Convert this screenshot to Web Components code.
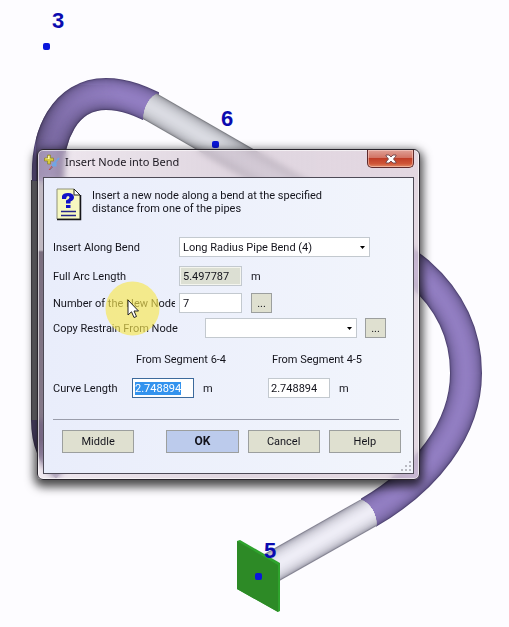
<!DOCTYPE html>
<html lang="en">
<head>
<meta charset="utf-8">
<meta name="viewport" content="width=device-width, initial-scale=1">
<title>Insert Node into Bend</title>
<style>
  body {
    margin: 0;
    background: #fdfcff;
    color: #14141c;
    font: 11px/13px Roboto, Arial, sans-serif;
  }
  main {
    position: relative;
  }
  dialog-window {
    position: absolute;
    top: 149px;
    left: 37px;
    right: 89px;
  }
  mouse-pointer {
    position: absolute;
    top: 281px;
    left: 105px;
  }
  .fields {
    display: flex;
    flex-direction: column;
    padding: 16px 0 15px;
  }
  .arc { margin-top: 9px; }
  .node { margin-top: 7px; }
  .restrain { margin-top: 5px; }
  .actions {
    display: flex;
    gap: 9px;
    margin: 10px 0 0 9px;
    padding-right: 2px;
  }
  .actions push-button:first-child {
    margin-right: 23px;
  }
</style>
</head>
<body>
<main>
  <pipe-scene></pipe-scene>
  <dialog-window>
    <span slot="title">Insert Node into Bend</span>
    <hint-banner>Insert a new node along a bend at the specified distance from one of the pipes</hint-banner>
    <div class="fields">
      <select-field label="Insert Along Bend" value="Long Radius Pipe Bend (4)"></select-field>
      <text-field class="arc" label="Full Arc Length" value="5.497787" unit="m" readonly></text-field>
      <text-field class="node" label="Number of the New Node" value="7" browse></text-field>
      <select-field class="restrain" label="Copy Restrain From Node" value="" wide browse></select-field>
    </div>
    <curve-lengths first="From Segment 6-4" second="From Segment 4-5" value="2.748894"></curve-lengths>
    <div class="actions">
      <push-button>Middle</push-button>
      <push-button primary>OK</push-button>
      <push-button>Cancel</push-button>
      <push-button>Help</push-button>
    </div>
  </dialog-window>
  <mouse-pointer></mouse-pointer>
</main>

<script>
const controlStyles = `
  input, select {
    box-sizing: border-box;
    height: 20px;
    margin: 0;
    padding: 0 3px;
    border: 1px solid #c3c9cf;
    border-radius: 0;
    background: #fff;
    color: inherit;
    font: 11px/15px Roboto, Arial, sans-serif;
    outline: none;
  }
  button {
    box-sizing: border-box;
    margin: 0;
    padding: 0;
    border: 1px solid #9c9f9e;
    border-radius: 0;
    background: #dfe0d0;
    color: inherit;
    font: inherit;
  }
  .browse {
    flex: none;
    width: 21px;
    height: 20px;
  }
`;

class PipeScene extends HTMLElement {
  constructor() {
    super();
    this.attachShadow({ mode: 'open' });
  }

  connectedCallback() {
    const purple = [[82, 70, 118], [146, 126, 194]];
    const dim = [[68, 58, 92], [118, 102, 156]];
    const white = [[134, 133, 148], [238, 237, 246]];
    const upper = [[128, 130, 136], [218, 219, 226]];
    const gray = [[70, 68, 74], [176, 175, 181]];

    this.shadowRoot.innerHTML = `
      <style>
        :host {
          display: block;
        }
        svg {
          display: block;
          width: 100%;
        }
        text {
          fill: #0b0bb0;
          font: bold 22px "Liberation Sans", Arial, sans-serif;
        }
        .dot { fill: #0a16dc; }
      </style>
      <svg viewBox="0 0 509 627" role="img" aria-label="Pipe model">
        <defs>
          <linearGradient id="shade" gradientUnits="userSpaceOnUse" x1="40" y1="170" x2="150" y2="90">
            <stop offset="0.1" stop-color="#fff" />
            <stop offset="0.8" stop-color="#000" />
          </linearGradient>
          <mask id="fade">
            <rect width="509" height="627" fill="url(#shade)" />
          </mask>
          <clipPath id="upper-end">
            <path d="M160 92C150 96 143 107 143 122L143 300H400V80Z" />
          </clipPath>
          <clipPath id="upper-bend">
            <path d="M0 0H159V100L150 122L143 119V300H0Z" />
          </clipPath>
          <clipPath id="lower-end">
            <path d="M359 499C370 502 377 514 377 528L377 600H200V480H359Z" />
          </clipPath>
          <clipPath id="lower-bend">
            <path d="M361 501V200H509V627H376V525L362 515Z" />
          </clipPath>
        </defs>
        ${this.pipe('M47 180V420', 32, gray)}
        ${this.pipe('M47 420C47 440 52 455 66 466', 32, dim)}
        <g clip-path="url(#upper-bend)">
          ${this.pipe('M48 180C46 135 65 94 106 94C125 94 142 101 162 112', 32, purple)}
          <g mask="url(#fade)">
            ${this.pipe('M48 180C46 135 65 94 106 94C125 94 142 101 162 112', 32, dim)}
          </g>
        </g>
        <g clip-path="url(#upper-end)">
          ${this.pipe('M134 97L370 233', 29, upper)}
        </g>
        <g clip-path="url(#lower-bend)">
          ${this.pipe('M380 246C395 254 408 264 419 273C450 300 466 335 466 373C466 430 425 480 368 513L350 523', 32, purple)}
        </g>
        <g clip-path="url(#lower-end)">
          ${this.pipe('M262 573L384 504', 31, white)}
        </g>
        <path d="M237 541L240 540L280 563V611L278 612L237 589Z" fill="#2fa32d" />
        <path d="M237 541L278 565V612L237 589Z" fill="#2d8a26" />
        <text x="52" y="28">3</text>
        <text x="221" y="126">6</text>
        <text x="264" y="558">5</text>
        <rect class="dot" x="43" y="43" width="7" height="7" rx="2" />
        <rect class="dot" x="212" y="141" width="7" height="7" rx="2" />
        <rect class="dot" x="255" y="573" width="7" height="7" rx="2" />
      </svg>
    `;
  }

  // stacked strokes, dark rim first, give the round shading
  pipe(d, size, [rim, light]) {
    let strokes = '';
    for (let width = size; width > 1; width -= 2) {
      const t = Math.sqrt(1 - (width / size) ** 2);
      const color = rim.map((c, i) => Math.round(c + (light[i] - c) * t));
      strokes += `<path d="${d}" fill="none" stroke="rgb(${color})" stroke-width="${width}" />`;
    }
    return strokes;
  }
}

class DialogWindow extends HTMLElement {
  constructor() {
    super();
    this.attachShadow({ mode: 'open' });
  }

  connectedCallback() {
    this.shadowRoot.innerHTML = `
      <style>
        :host {
          display: block;
          box-sizing: border-box;
          padding: 0 5px 5px;
          border: 1px solid #2a262e;
          border-radius: 6px;
          background:
            linear-gradient(transparent 100px, rgba(75, 60, 82, 0.6) 102px, rgba(75, 60, 82, 0.5) 290px, transparent 320px) 0 0 / 5px 100% no-repeat,
            linear-gradient(90deg, rgba(222, 208, 220, 0.45), rgba(204, 188, 203, 0.6) 50%, rgba(218, 204, 216, 0.75));
          box-shadow: inset 0 0 0 1px rgba(255, 255, 255, 0.6), 0 4px 10px 3px rgba(0, 0, 0, 0.7);
          backdrop-filter: blur(3px);
        }
        header {
          display: flex;
          align-items: flex-start;
          height: 27px;
        }
        .icon {
          flex: none;
          margin: 4px 5px 0 1px;
        }
        h1 {
          flex: 1;
          margin: 4px 0 0;
          color: #1b1720;
          font: 11px/16px "Noto Sans", sans-serif;
        }
        button {
          display: grid;
          place-items: center;
          width: 47px;
          height: 18px;
          padding: 0;
          border: 1px solid #5e2a2c;
          border-top: 0;
          border-radius: 0 0 5px 5px;
          background: linear-gradient(#e0a197, #d27464 45%, #c03e27 50%, #cf5537 80%, #e08a66);
          box-shadow: inset 0 0 0 1px rgba(255, 220, 210, 0.5);
        }
        .body {
          position: relative;
          padding: 10px 10px 20px 9px;
          border: 1px solid #4d4a56;
          background: linear-gradient(90deg, #e9edfb, #f2f5fc);
        }
        .grip {
          position: absolute;
          right: 1px;
          bottom: 1px;
        }
      </style>
      <header>
        <svg class="icon" width="16" height="17" viewBox="0 0 16 17" aria-hidden="true">
          <path d="M5 16L9 11" stroke="#c4453c" stroke-width="1" />
          <path d="M8 12L15 4" stroke="#6aa5e6" stroke-width="1.500" />
          <path d="M6 16L9 13" stroke="#7a7f9c" stroke-width="1" />
          <path d="M8.500 8.500h4v4h-4z" fill="#6fa6e4" />
          <path d="M3.500 1h3v3h3v3h-3v3h-3V7h-3V4h3z" fill="#d9cb3c" stroke="#8f8735" stroke-width="0.800" />
          <path d="M4 2h1.500v3h-4V4.500H4z" fill="#fbf6a8" />
        </svg>
        <h1><slot name="title"></slot></h1>
        <button type="button" aria-label="Close">
          <svg width="12" height="10" viewBox="0 0 12 10">
            <path d="M1 1h3l2 2 2-2h3v1L8.500 5 11 8v1H8L6 7 4 9H1V8l2.500-3L1 2z" fill="#fff" stroke="#6d4448" stroke-width="0.900" />
          </svg>
        </button>
      </header>
      <div class="body">
        <slot></slot>
        <svg class="grip" width="11" height="11" viewBox="0 0 11 11" aria-hidden="true">
          <path d="M8 0h2v2h-2zM4 4h2v2h-2zM8 4h2v2h-2zM0 8h2v2h-2zM4 8h2v2h-2zM8 8h2v2h-2z" fill="#b9bac2" />
        </svg>
      </div>
    `;
  }
}

class HintBanner extends HTMLElement {
  constructor() {
    super();
    this.attachShadow({ mode: 'open' });
  }

  connectedCallback() {
    this.shadowRoot.innerHTML = `
      <style>
        :host {
          display: flex;
          gap: 10px;
          padding-left: 3px;
        }
        svg {
          flex: none;
        }
        p {
          max-width: 236px;
          margin: 1px 0 0;
        }
      </style>
      <svg width="26" height="33" viewBox="0 0 26 33" aria-hidden="true">
        <path d="M1 1H18L24 7V31H1Z" fill="#f6f8c0" stroke="#8f9078" />
        <path d="M24.500 7V31.500H1" fill="none" stroke="#15151a" stroke-width="1.500" />
        <path d="M18 1V7H24Z" fill="#fff" stroke="#222" />
        <path d="M6 11V8Q7 5 12 5Q18 5 18 9.500Q18 12 14.500 13.500V15.500H10V12.500Q13.500 11 13.500 9.500Q13.500 8 12 8Q10.500 8 10 11Z" fill="#1212c8" />
        <path d="M10 17h4.500v3h-4.500z" fill="#1212c8" />
        <path d="M5 23.500H20M5 27.500H20" stroke="#24248c" stroke-width="1.500" />
      </svg>
      <p><slot></slot></p>
    `;
  }
}

class TextField extends HTMLElement {
  constructor() {
    super();
    this.attachShadow({ mode: 'open' });
  }

  connectedCallback() {
    const unit = this.getAttribute('unit');
    this.shadowRoot.innerHTML = `
      <style>
        ${controlStyles}
        :host {
          display: flex;
          align-items: center;
        }
        label {
          flex: none;
          width: 122px;
          margin-right: 4px;
          overflow: hidden;
          white-space: nowrap;
        }
        input {
          width: 63px;
          margin-right: 9px;
        }
        input[readonly] {
          background: #dcdfd3;
          box-shadow: inset 0 0 0 1px #f4f5ee;
        }
      </style>
      <label for="field">${this.getAttribute('label')}</label>
      <input id="field" type="text" value="${this.getAttribute('value')}" ${this.hasAttribute('readonly') ? 'readonly' : ''}>
      ${unit ? `<span>${unit}</span>` : ''}
      ${this.hasAttribute('browse') ? '<button class="browse" type="button">...</button>' : ''}
    `;
  }
}

class SelectField extends HTMLElement {
  constructor() {
    super();
    this.attachShadow({ mode: 'open' });
  }

  connectedCallback() {
    this.shadowRoot.innerHTML = `
      <style>
        ${controlStyles}
        :host {
          display: flex;
          align-items: center;
          gap: 8px;
          padding-right: 33px;
        }
        :host([wide]) {
          padding-right: 17px;
        }
        label {
          flex: none;
          width: 118px;
          white-space: nowrap;
        }
        :host([wide]) label {
          width: 144px;
        }
        .box {
          display: grid;
          flex: 1;
          align-items: center;
        }
        select, svg {
          grid-area: 1 / 1;
        }
        select {
          width: 100%;
          appearance: none;
        }
        svg {
          justify-self: end;
          margin-right: 5px;
          pointer-events: none;
        }
      </style>
      <label for="field">${this.getAttribute('label')}</label>
      <div class="box">
        <select id="field">
          <option>${this.getAttribute('value')}</option>
        </select>
        <svg width="5" height="3" viewBox="0 0 5 3" aria-hidden="true"><path d="M0 0H5L2.500 3Z" fill="#000" /></svg>
      </div>
      ${this.hasAttribute('browse') ? '<button class="browse" type="button">...</button>' : ''}
    `;
  }
}

class CurveLengths extends HTMLElement {
  constructor() {
    super();
    this.attachShadow({ mode: 'open' });
  }

  connectedCallback() {
    const value = this.getAttribute('value');
    this.shadowRoot.innerHTML = `
      <style>
        ${controlStyles}
        :host {
          display: grid;
          grid-template-columns: 79px 136px 1fr;
          row-gap: 12px;
          align-items: center;
          margin-right: 4px;
          padding-bottom: 21px;
          border-bottom: 1px solid #9a9dab;
        }
        .heading {
          padding-left: 4px;
          white-space: nowrap;
        }
        #first {
          grid-column: 2;
        }
        .entry {
          display: flex;
          align-items: center;
          gap: 9px;
        }
        input {
          width: 62px;
          padding: 0 2px;
        }
        input:focus {
          border-color: #3c6a9c;
        }
        input::selection {
          background: #3393ee;
          color: #fff;
        }
      </style>
      <span class="heading" id="first">${this.getAttribute('first')}</span>
      <span class="heading" id="second">${this.getAttribute('second')}</span>
      <label for="field" id="name">Curve Length</label>
      <div class="entry">
        <input id="field" type="text" value="${value}" aria-labelledby="name first"><span>m</span>
      </div>
      <div class="entry">
        <input type="text" value="${value}" aria-labelledby="name second"><span>m</span>
      </div>
    `;

    const field = this.shadowRoot.querySelector('#field');
    field.focus();
    field.select();
  }
}

class PushButton extends HTMLElement {
  constructor() {
    super();
    this.attachShadow({ mode: 'open' });
  }

  connectedCallback() {
    this.shadowRoot.innerHTML = `
      <style>
        ${controlStyles}
        :host {
          display: block;
          flex: 1;
        }
        button {
          width: 100%;
          height: 23px;
        }
        :host([primary]) button {
          background: #bccbec;
          font-size: 12px;
          font-weight: bold;
        }
      </style>
      <button type="button"><slot></slot></button>
    `;
  }
}

class MousePointer extends HTMLElement {
  constructor() {
    super();
    this.attachShadow({ mode: 'open' });
  }

  connectedCallback() {
    this.shadowRoot.innerHTML = `
      <style>
        :host {
          display: block;
          pointer-events: none;
        }
        svg {
          display: block;
        }
      </style>
      <svg width="55" height="55" viewBox="0 0 55 55" aria-hidden="true">
        <circle cx="27.500" cy="27.500" r="27" fill="#f8e650" opacity="0.650" />
        <path d="M23 19V34L26.500 30.800L29 36.500L31.500 35.500L29 30H33.500Z" fill="#fff" stroke="#222" />
      </svg>
    `;
  }
}

customElements.define('pipe-scene', PipeScene);
customElements.define('dialog-window', DialogWindow);
customElements.define('hint-banner', HintBanner);
customElements.define('text-field', TextField);
customElements.define('select-field', SelectField);
customElements.define('curve-lengths', CurveLengths);
customElements.define('push-button', PushButton);
customElements.define('mouse-pointer', MousePointer);
</script>
</body>
</html>
